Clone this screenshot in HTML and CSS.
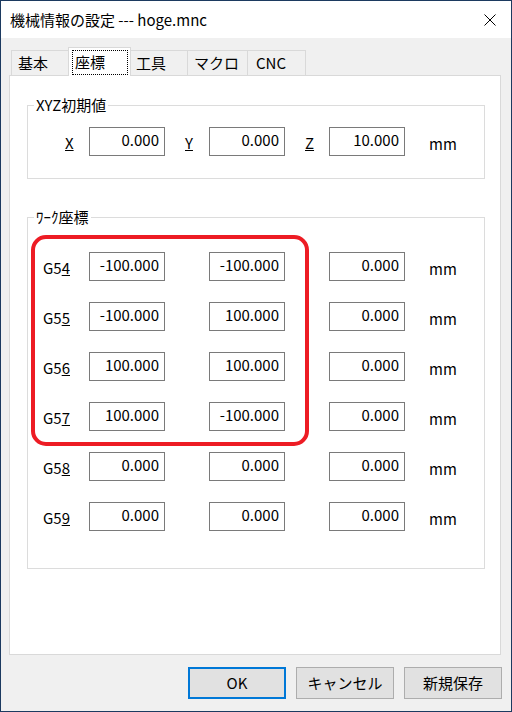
FILE: index.html
```html
<!DOCTYPE html>
<html lang="ja">
<head>
<meta charset="utf-8">
<title>機械情報の設定</title>
<link rel="stylesheet" href="styles.css">
</head>
<body>
<div class="window">
  <div class="titlebar">
    <span class="title">機械情報の設定 --- hoge.mnc</span>
    <svg class="close" width="12" height="12" viewBox="0 0 12 12"><path d="M0.5 0.5 L11.5 11.5 M11.5 0.5 L0.5 11.5" stroke="#000" stroke-width="1" fill="none"/></svg>
  </div>
  <div class="client">
    <div class="tabs">
      <div class="tab t1">基本</div>
      <div class="tab t2 active"><span class="focus">座標</span></div>
      <div class="tab t3">工具</div>
      <div class="tab t4">マクロ</div>
      <div class="tab t5">CNC</div>
    </div>
    <div class="panel">
      <fieldset class="group g1">
        <legend>XYZ初期値</legend>
        <div class="xyz-row">
          <label class="axis"><u>X</u></label><div class="field">0.000</div>
          <label class="axis"><u>Y</u></label><div class="field">0.000</div>
          <label class="axis"><u>Z</u></label><div class="field">10.000</div>
          <span class="unit">mm</span>
        </div>
      </fieldset>
      <fieldset class="group g2">
        <legend>ﾜｰｸ座標</legend>
        <div class="work-row">
          <label class="gcode">G5<u>4</u></label><div class="field">-100.000</div><div class="field">-100.000</div><div class="field">0.000</div><span class="unit">mm</span>
        </div>
        <div class="work-row">
          <label class="gcode">G5<u>5</u></label><div class="field">-100.000</div><div class="field">100.000</div><div class="field">0.000</div><span class="unit">mm</span>
        </div>
        <div class="work-row">
          <label class="gcode">G5<u>6</u></label><div class="field">100.000</div><div class="field">100.000</div><div class="field">0.000</div><span class="unit">mm</span>
        </div>
        <div class="work-row">
          <label class="gcode">G5<u>7</u></label><div class="field">100.000</div><div class="field">-100.000</div><div class="field">0.000</div><span class="unit">mm</span>
        </div>
        <div class="work-row">
          <label class="gcode">G5<u>8</u></label><div class="field">0.000</div><div class="field">0.000</div><div class="field">0.000</div><span class="unit">mm</span>
        </div>
        <div class="work-row">
          <label class="gcode">G5<u>9</u></label><div class="field">0.000</div><div class="field">0.000</div><div class="field">0.000</div><span class="unit">mm</span>
        </div>
      </fieldset>
      <div class="highlight"></div>
    </div>
    <div class="buttons">
      <button class="btn default">OK</button>
      <button class="btn">キャンセル</button>
      <button class="btn">新規保存</button>
    </div>
  </div>
</div>
</body>
</html>
```
FILE: styles.css
```css
* { box-sizing: border-box; }
html, body { margin: 0; padding: 0; background: #f0f0f0; }
body {
  font-family: "Noto Sans CJK JP", "Noto Sans", sans-serif;
  font-size: 15px;
  color: #000;
}
.window {
  width: 512px;
  height: 712px;
  border: 1px solid #1c3a60;
  display: flex;
  flex-direction: column;
  background: #f0f0f0;
}
.titlebar {
  height: 37px;
  background: #fff;
  display: flex;
  align-items: center;
  justify-content: space-between;
  padding: 0 15px 0 9px;
  flex: none;
}
.title { font-size: 15px; line-height: 18px; }
.close { display: block; }
.client {
  flex: 1;
  display: flex;
  flex-direction: column;
  padding: 12px 10px 0 8px;
}
.tabs {
  display: flex;
  height: 25px;
  padding-left: 2px;
  position: relative;
  z-index: 1;
}
.tab {
  height: 25px;
  border: 1px solid #d9d9d9;
  border-bottom: none;
  background: #f0f0f0;
  padding-left: 6px;
  line-height: 24px;
  margin-left: -1px;
}
.t1 { width: 60px; margin-left: 0; }
.t3 { width: 60px; padding-left: 7px; }
.t4 { width: 61px; }
.t5 { width: 59px; padding-left: 8px; }
.tab.active {
  width: 63px;
  height: 29px;
  margin-top: -3px;
  margin-left: -3px;
  margin-right: -2px;
  background: #fff;
  padding: 2px 2px 0 3px;
  position: relative;
  z-index: 2;
}
.focus {
  display: block;
  height: 25px;
  border: 1px dotted #000;
  line-height: 22px;
  padding-left: 2px;
}
.panel {
  position: relative;
  height: 580px;
  background: #fff;
  border: 1px solid #d9d9d9;
  padding: 0 15px 0 17px;
}
.group {
  margin: 0;
  border: 1px solid #dcdcdc;
  padding: 0;
  min-width: 0;
}
.group legend {
  margin-left: 6px;
  padding: 0 2px;
  line-height: 18px;
}
.g1 { margin-top: 20px; padding: 13px 0 22px 0; }
.g2 { margin-top: 29px; padding: 26px 0 37px 0; }
.xyz-row, .work-row {
  display: flex;
  align-items: center;
  height: 29px;
}
.xyz-row { padding-left: 37px; }
.work-row { padding-left: 15px; }
.work-row + .work-row { margin-top: 21px; }
.axis {
  width: 24px;
  line-height: 18px;
  padding-top: 2px;
}
.axis + .field { margin-right: 20px; }
.field {
  width: 76px;
  height: 29px;
  border: 1px solid #7a7a7a;
  background: #fff;
  text-align: right;
  padding-right: 5px;
  line-height: 24px;
  flex: none;
}
.gcode {
  width: 46px;
  line-height: 18px;
  padding-top: 2px;
}
.work-row .field + .field { margin-left: 44px; }
.unit {
  margin-left: 24px;
  line-height: 18px;
  padding-top: 4px;
}
.xyz-row .unit { margin-left: 4px; }
.highlight {
  position: absolute;
  left: 21px;
  top: 159px;
  width: 278px;
  height: 211px;
  border: 4px solid #ed1c24;
  border-radius: 15px;
  pointer-events: none;
}
.buttons {
  display: flex;
  justify-content: flex-end;
  gap: 10px;
  margin-top: 12px;
  margin-right: -1px;
}
.btn {
  width: 98px;
  height: 32px;
  border: 1px solid #adadad;
  background: #e1e1e1;
  font-family: inherit;
  font-size: 15px;
  color: #000;
  padding: 0;
  line-height: 18px;
}
.btn.default { border: 2px solid #0078d7; }
```
